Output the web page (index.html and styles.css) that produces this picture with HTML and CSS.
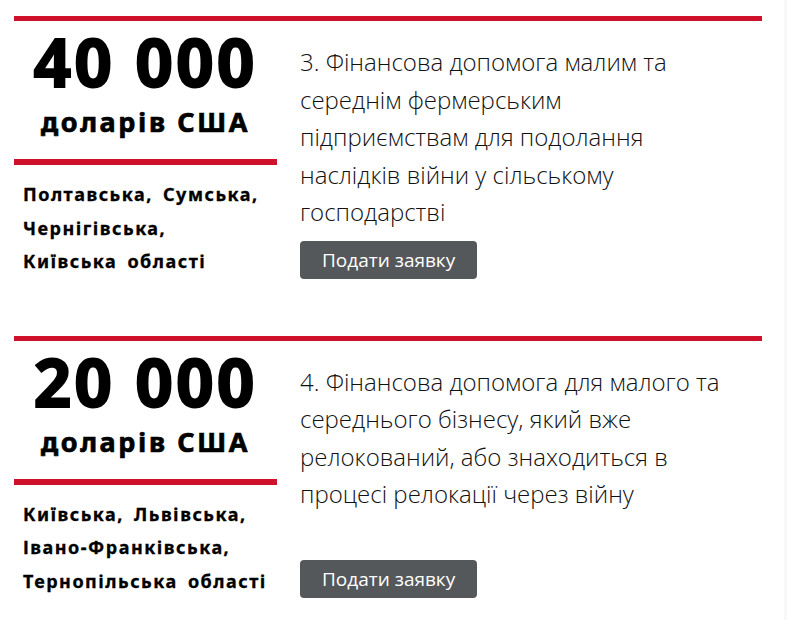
FILE: index.html
```html
<!DOCTYPE html>
<html lang="uk">
<head>
    <meta charset="UTF-8">
    <meta name="viewport" content="width=device-width, initial-scale=1.0">
    <title>Фінансова допомога</title>
    <link rel="stylesheet" href="styles.css">
</head>
<body>
    <div class="page">
        <div class="offer">
            <div class="offer-summary">
                <div class="amount">40 000</div>
                <div class="currency">доларів США</div>
                <div class="regions">
                    Полтавська, Сумська,<br>
                    Чернігівська,<br>
                    Київська області
                </div>
            </div>
            <div class="offer-info">
                <p class="offer-title">3. Фінансова допомога малим та середнім фермерським підприємствам для подолання наслідків війни у сільському господарстві</p>
                <a href="#" class="apply-btn">Подати заявку</a>
            </div>
        </div>

        <div class="offer">
            <div class="offer-summary">
                <div class="amount">20 000</div>
                <div class="currency">доларів США</div>
                <div class="regions">
                    Київська, Львівська,<br>
                    Івано-Франківська,<br>
                    Тернопільська області
                </div>
            </div>
            <div class="offer-info">
                <p class="offer-title">4. Фінансова допомога для малого та середнього бізнесу, який вже релокований, або знаходиться в процесі релокації через війну</p>
                <a href="#" class="apply-btn">Подати заявку</a>
            </div>
        </div>
    </div>
</body>
</html>
```

FILE: styles.css
```css
html {
    background-color: #f8f8f8;
}
body {
    margin: 0;
    padding: 0;
    width: 784px;
    min-height: 620px;
    background-color: #fff;
    font-family: "Open Sans", "Noto Sans", sans-serif;
    color: #111;
}
.page {
    padding: 16px 0 0 14px;
    width: 748px;
}
.offer {
    display: flex;
    border-top: 5px solid #d0112b;
}
.offer + .offer {
    margin-top: 57px;
}
.offer-summary {
    width: 263px;
    flex-shrink: 0;
    color: #000;
}
.amount {
    font-family: "Noto Sans", sans-serif;
    font-weight: 700;
    font-size: 66px;
    line-height: 66px;
    letter-spacing: 3px;
    -webkit-text-stroke: 1.8px #000;
    text-align: center;
    padding-top: 7px;
}
.currency {
    font-family: "Noto Sans", sans-serif;
    font-weight: 700;
    font-size: 27px;
    line-height: 30px;
    letter-spacing: 2.6px;
    -webkit-text-stroke: 0.7px #000;
    text-align: center;
    margin-top: 13px;
    padding-bottom: 22px;
    border-bottom: 6px solid #d0112b;
}
.regions {
    font-family: "Noto Sans", sans-serif;
    font-weight: 700;
    font-size: 18px;
    line-height: 33.5px;
    letter-spacing: 1.5px;
    word-spacing: 4px;
    -webkit-text-stroke: 0.3px #000;
    padding: 13px 0 0 9px;
}
.offer-info {
    flex: 1;
    display: flex;
    flex-direction: column;
    align-items: flex-start;
    padding: 22px 0 0 23px;
}
.offer-title {
    width: 424px;
    margin: 0 0 10px;
    font-weight: 300;
    font-size: 24px;
    line-height: 37.5px;
    color: #111;
}
.apply-btn {
    margin-top: auto;
    display: inline-block;
    height: 38px;
    line-height: 38px;
    padding: 0 22px;
    border-radius: 4px;
    background-color: #55585b;
    color: #fff;
    font-size: 19px;
    text-decoration: none;
}
```
